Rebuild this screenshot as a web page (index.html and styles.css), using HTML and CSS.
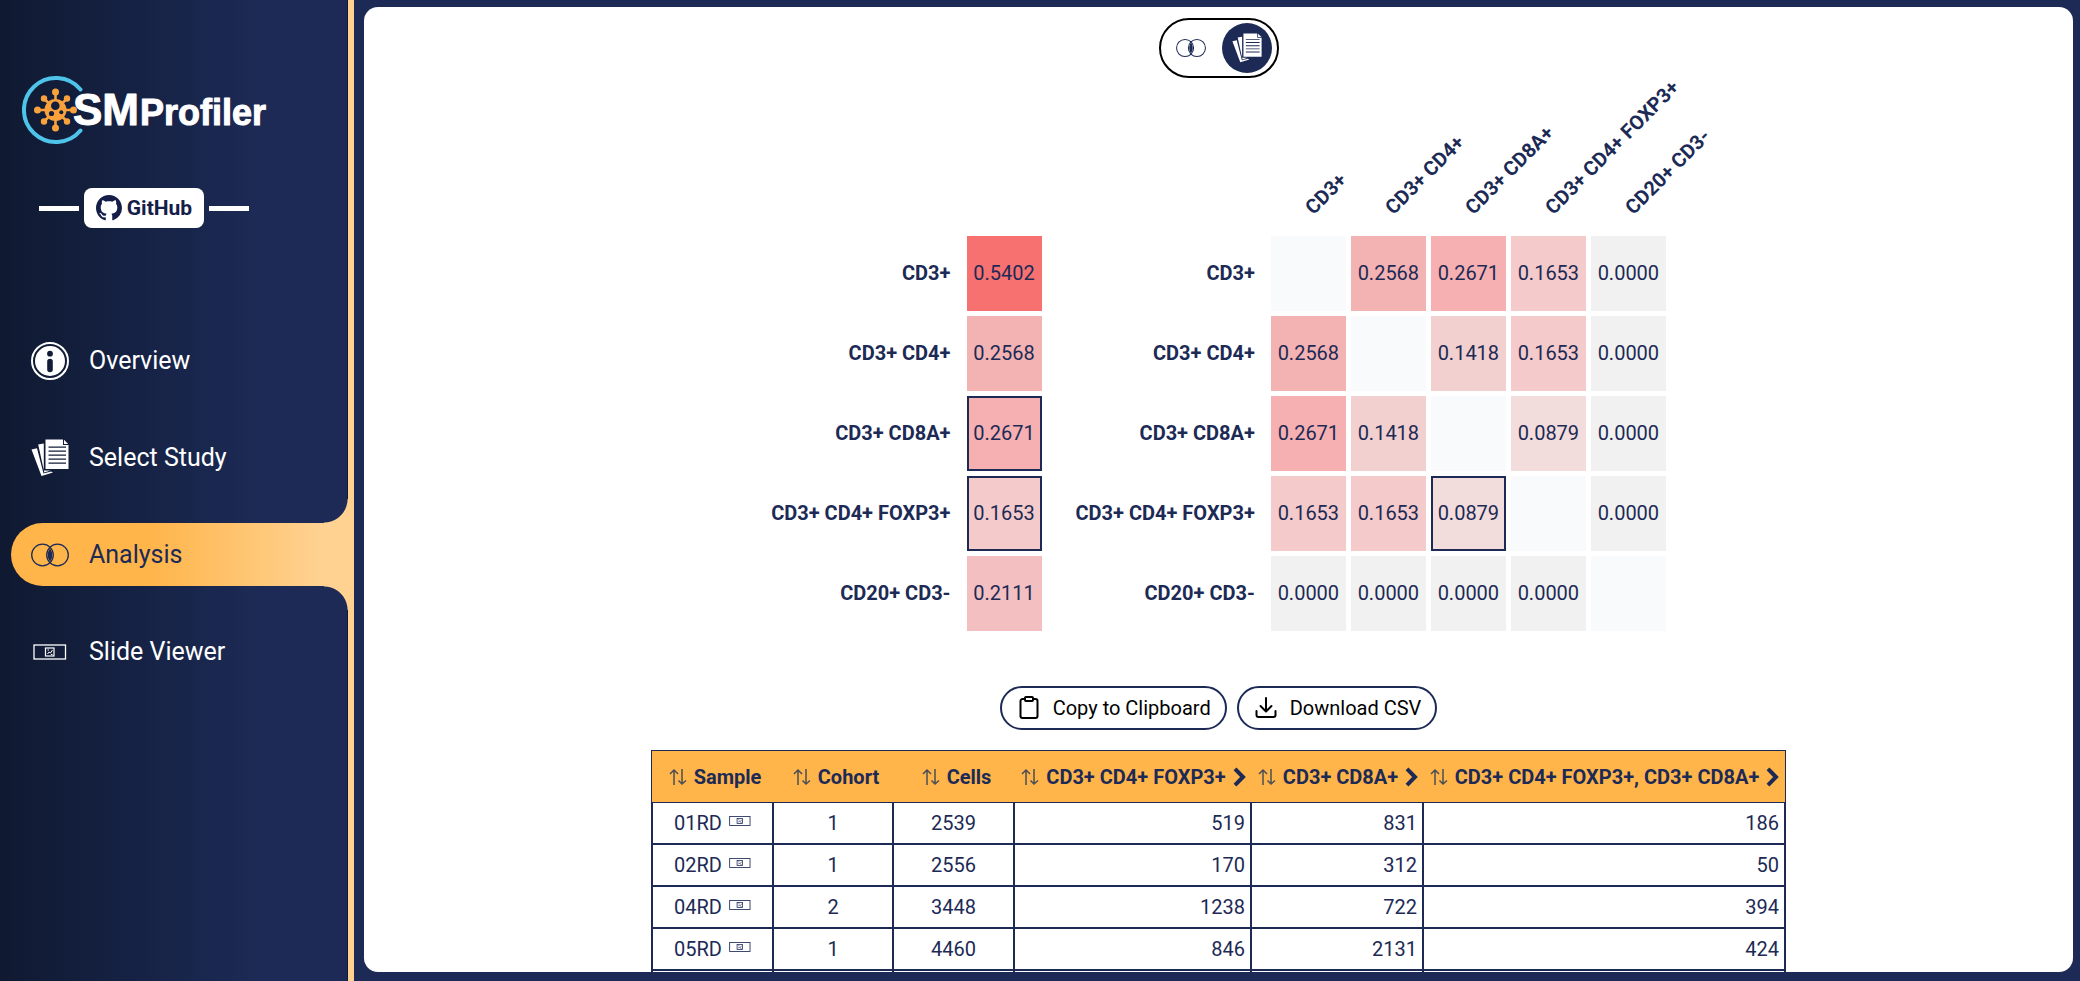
FILE: index.html
```html
<!DOCTYPE html>
<html lang="en">
<head>
<meta charset="utf-8">
<title>SMProfiler</title>
<link rel="stylesheet" href="styles.css">
</head>
<body>
<svg class="sprite" aria-hidden="true">
  <symbol id="i-info" viewBox="0 0 38 38">
    <circle cx="19" cy="19" r="18" fill="none" stroke="currentColor" stroke-width="2"/>
    <path fill="currentColor" fill-rule="evenodd" d="M19 4a15 15 0 1 0 0 30a15 15 0 1 0 0-30zM19 8.800a2.900 2.900 0 1 1 0 5.800a2.900 2.900 0 1 1 0-5.800zM16.200 19.500a2.800 2.800 0 0 1 5.600 0v8a2.800 2.800 0 0 1-5.600 0z"/>
  </symbol>
  <symbol id="i-docs" viewBox="0 0 38 38">
    <g fill="currentColor">
      <path d="M.5 10.500 6 9.200 12.500 34.500 20 32.600 22 33.600 10.500 37z"/>
      <path d="M7.200 5.600 12.800 4.600V31.500H19.500L13.300 33.500z"/>
      <path fill-rule="evenodd" d="M14.500.5H32V6H37.500V30H14.500zM17.500 7.500v1.200H35V7.500zM17.500 11.500v1.200H35V11.500zM17.500 15.500v1.200H35V15.500zM17.500 19.500v1.200H35V19.500zM17.500 23.500v1.200H35V23.500z"/>
      <path d="M33 .8 37.200 5H33z"/>
    </g>
  </symbol>
  <symbol id="i-venn" viewBox="0 0 38 24">
    <circle cx="11.500" cy="12" r="10.800" fill="none" stroke="currentColor" stroke-width="1.300"/>
    <circle cx="26.500" cy="12" r="10.800" fill="none" stroke="currentColor" stroke-width="1.300"/>
    <path d="M19 5.500C22 9 22 15 19 18.500C16 15 16 9 19 5.500z" fill="currentColor"/>
  </symbol>
  <symbol id="i-slide" viewBox="0 0 34 16">
    <g fill="none" stroke="currentColor">
      <rect x="1" y="1" width="31.500" height="14" stroke-width="1.300"/>
      <rect x="12.500" y="4" width="8.500" height="8" stroke-width="1.200"/>
      <path d="M14.500 10l1.500-2 1.500 1 2-3M14.500 6h1.500M18 10.500h1.500"/>
    </g>
  </symbol>
  <symbol id="i-sort" viewBox="0 0 18 18">
    <path d="M5 17V2M1 6 5 2 9 6M13 1V16M9.500 12.500 13 16 17 12.500" fill="none" stroke="currentColor" stroke-width="1.500"/>
  </symbol>
  <symbol id="i-chev" viewBox="0 0 13 20">
    <path d="M2 1.800 10 10 2 18.200" fill="none" stroke="currentColor" stroke-width="4"/>
  </symbol>
</svg>

<aside class="sidebar">
  <svg class="logo" width="250" height="70" viewBox="0 0 250 70" role="img" aria-label="SMProfiler">
    <path d="M58.500 14.500A32 32 0 1 0 58.500 55.500" fill="none" stroke="#4fc4ea" stroke-width="4" stroke-linecap="round"/>
    <g fill="#f9a13c" stroke="#f9a13c">
      <circle cx="33.500" cy="35" r="11" stroke="none"/>
      <path stroke-width="2.600" d="M33.500 17V53M16 35H52M22 23.500 45 46.500M45 23.500 22 46.500"/>
      <g stroke="none">
        <circle cx="33.500" cy="17" r="3.500"/><circle cx="33.500" cy="53" r="3.500"/><circle cx="15.500" cy="35" r="3.500"/><circle cx="51.500" cy="35" r="3.500"/>
        <circle cx="22" cy="23.500" r="3.200"/><circle cx="45" cy="23.500" r="3.200"/><circle cx="22" cy="46.500" r="3.200"/><circle cx="45" cy="46.500" r="3.200"/>
      </g>
      <g fill="#131d3a" stroke="none"><circle cx="33.300" cy="30.700" r="4.300"/><circle cx="29.500" cy="38.500" r="2.600"/><circle cx="39.300" cy="37.200" r="2"/></g>
    </g>
    <text class="logo-big" x="51" y="50">SM</text>
    <text class="logo-small" x="118" y="50">Profiler</text>
  </svg>

  <div class="source">
    <span class="rule"></span>
    <a class="github" href="#github">
      <svg width="26" height="26" viewBox="0 0 16 16" aria-hidden="true"><path fill="currentColor" d="M8 0C3.580 0 0 3.580 0 8c0 3.540 2.290 6.530 5.470 7.590.4.070.55-.17.55-.38 0-.19-.01-.82-.01-1.490-2.010.37-2.530-.49-2.690-.94-.09-.23-.48-.94-.82-1.130-.28-.15-.68-.52-.01-.53.63-.01 1.080.58 1.230.82.72 1.210 1.870.87 2.330.66.07-.52.28-.87.51-1.070-1.780-.2-3.640-.89-3.640-3.950 0-.87.31-1.590.82-2.150-.08-.2-.36-1.020.08-2.120 0 0 .67-.21 2.200.82.64-.18 1.320-.27 2-.27s1.360.09 2 .27c1.530-1.040 2.200-.82 2.200-.82.44 1.100.16 1.920.08 2.120.51.56.82 1.270.82 2.150 0 3.070-1.870 3.750-3.650 3.950.29.25.54.73.54 1.480 0 1.070-.01 1.930-.01 2.200 0 .21.15.46.55.38A8.010 8.010 0 0 0 16 8c0-4.420-3.580-8-8-8z"/></svg>
      <span>GitHub</span>
    </a>
    <span class="rule"></span>
  </div>

  <nav class="nav">
    <a class="item" href="#overview"><svg class="icon"><use href="#i-info"/></svg>Overview</a>
    <a class="item" href="#study"><svg class="icon"><use href="#i-docs"/></svg>Select Study</a>
    <a class="item active" href="#analysis" aria-current="page"><svg class="icon"><use href="#i-venn"/></svg>Analysis</a>
    <a class="item" href="#slides"><svg class="icon slide"><use href="#i-slide"/></svg>Slide Viewer</a>
  </nav>
</aside>

<main class="panel">
  <div class="toggle">
    <button class="mode" type="button" aria-label="Phenotypes"><svg width="30" height="20"><use href="#i-venn"/></svg></button>
    <button class="mode on" type="button" aria-label="Studies"><svg width="30" height="30"><use href="#i-docs"/></svg></button>
  </div>

  <div class="maps">
    <table class="heat">
      <tbody>
        <tr><th scope="row">CD3+</th><td class="v5402">0.5402</td></tr>
        <tr><th scope="row">CD3+ CD4+</th><td class="v2568">0.2568</td></tr>
        <tr><th scope="row">CD3+ CD8A+</th><td class="v2671 picked">0.2671</td></tr>
        <tr><th scope="row">CD3+ CD4+ FOXP3+</th><td class="v1653 picked">0.1653</td></tr>
        <tr><th scope="row">CD20+ CD3-</th><td class="v2111">0.2111</td></tr>
      </tbody>
    </table>
    <table class="heat">
      <thead>
        <tr><td class="corner"></td><th scope="col"><span>CD3+</span></th><th scope="col"><span>CD3+ CD4+</span></th><th scope="col"><span>CD3+ CD8A+</span></th><th scope="col"><span>CD3+ CD4+ FOXP3+</span></th><th scope="col"><span>CD20+ CD3-</span></th></tr>
      </thead>
      <tbody>
        <tr><th scope="row">CD3+</th><td class="self"></td><td class="v2568">0.2568</td><td class="v2671">0.2671</td><td class="v1653">0.1653</td><td class="v0">0.0000</td></tr>
        <tr><th scope="row">CD3+ CD4+</th><td class="v2568">0.2568</td><td class="self"></td><td class="v1418">0.1418</td><td class="v1653">0.1653</td><td class="v0">0.0000</td></tr>
        <tr><th scope="row">CD3+ CD8A+</th><td class="v2671">0.2671</td><td class="v1418">0.1418</td><td class="self"></td><td class="v0879">0.0879</td><td class="v0">0.0000</td></tr>
        <tr><th scope="row">CD3+ CD4+ FOXP3+</th><td class="v1653">0.1653</td><td class="v1653">0.1653</td><td class="v0879 picked">0.0879</td><td class="self"></td><td class="v0">0.0000</td></tr>
        <tr><th scope="row">CD20+ CD3-</th><td class="v0">0.0000</td><td class="v0">0.0000</td><td class="v0">0.0000</td><td class="v0">0.0000</td><td class="self"></td></tr>
      </tbody>
    </table>
  </div>

  <div class="actions">
    <button class="pill" type="button">
      <svg width="24" height="24" viewBox="0 0 24 24" fill="none" stroke="currentColor" stroke-width="2" aria-hidden="true"><path d="M8 3H5.500A2 2 0 0 0 3.500 5V20A2 2 0 0 0 5.500 22H18.500A2 2 0 0 0 20.500 20V5A2 2 0 0 0 18.500 3H16"/><rect x="8" y="1" width="8" height="4" rx="1"/></svg>
      Copy to Clipboard
    </button>
    <button class="pill" type="button">
      <svg width="24" height="24" viewBox="0 0 24 24" fill="none" stroke="currentColor" stroke-width="2" stroke-linecap="round" stroke-linejoin="round" aria-hidden="true"><path d="M12 2V15M6.500 10 12 15.500 17.500 10M2.500 15V19A2 2 0 0 0 4.500 21H19.500A2 2 0 0 0 21.500 19V15"/></svg>
      Download CSV
    </button>
  </div>

  <table class="data">
    <colgroup><col class="c-sample"><col class="c-mid"><col class="c-cells"><col class="c-a"><col class="c-b"><col class="c-ab"></colgroup>
    <thead>
      <tr>
        <th scope="col"><button type="button"><svg class="sort"><use href="#i-sort"/></svg>Sample</button></th>
        <th scope="col"><button type="button"><svg class="sort"><use href="#i-sort"/></svg>Cohort</button></th>
        <th scope="col"><button type="button"><svg class="sort"><use href="#i-sort"/></svg>Cells</button></th>
        <th scope="col"><button type="button"><svg class="sort"><use href="#i-sort"/></svg>CD3+ CD4+ FOXP3+<svg class="chev"><use href="#i-chev"/></svg></button></th>
        <th scope="col"><button type="button"><svg class="sort"><use href="#i-sort"/></svg>CD3+ CD8A+<svg class="chev"><use href="#i-chev"/></svg></button></th>
        <th scope="col"><button type="button"><svg class="sort"><use href="#i-sort"/></svg>CD3+ CD4+ FOXP3+, CD3+ CD8A+<svg class="chev"><use href="#i-chev"/></svg></button></th>
      </tr>
    </thead>
    <tbody>
      <tr><td>01RD <svg class="mini"><use href="#i-slide"/></svg></td><td>1</td><td>2539</td><td class="num">519</td><td class="num">831</td><td class="num">186</td></tr>
      <tr><td>02RD <svg class="mini"><use href="#i-slide"/></svg></td><td>1</td><td>2556</td><td class="num">170</td><td class="num">312</td><td class="num">50</td></tr>
      <tr><td>04RD <svg class="mini"><use href="#i-slide"/></svg></td><td>2</td><td>3448</td><td class="num">1238</td><td class="num">722</td><td class="num">394</td></tr>
      <tr><td>05RD <svg class="mini"><use href="#i-slide"/></svg></td><td>1</td><td>4460</td><td class="num">846</td><td class="num">2131</td><td class="num">424</td></tr>
      <tr><td></td><td></td><td></td><td></td><td></td><td></td></tr>
    </tbody>
  </table>
</main>
</body>
</html>
```
FILE: styles.css
```css
:root {
  --navy: #1c2a55;
  --orange: #ffb54a;
  --peach: #ffd292;
}

* { box-sizing: border-box; }

body {
  margin: 0;
  height: 100vh;
  display: flex;
  overflow: hidden;
  background: var(--navy);
  color: var(--navy);
  font-family: Roboto, "Liberation Sans", sans-serif;
  font-size: 20px;
}

.sprite { position: absolute; width: 0; height: 0; }

button { font: inherit; color: inherit; cursor: pointer; }

/* Sidebar */
.sidebar {
  flex: none;
  width: 354px;
  border-right: 6px solid var(--peach);
  background: linear-gradient(90deg, #0f1931 0, #1c2a55 256px);
  background-clip: padding-box;
  box-shadow: inset -1px 0 #0f1931;
  padding-top: 75px;
}

.logo { display: block; margin-left: 22px; }
.logo text {
  fill: #fff;
  stroke: #fff;
  stroke-width: 1px;
  stroke-linejoin: round;
  font-family: "Liberation Sans", Arial, sans-serif;
  font-weight: 700;
}
.logo .logo-big { font-size: 44px; }
.logo .logo-small { font-size: 36px; }

.source {
  display: flex;
  align-items: center;
  gap: 5px;
  margin: 43px 0 0 39px;
}
.rule { width: 40px; height: 5px; background: #fff; }
.github {
  display: flex;
  align-items: center;
  justify-content: center;
  gap: 5px;
  width: 120px;
  height: 40px;
  border-radius: 8px;
  background: #fff;
  color: #151d49;
  font-size: 21px;
  font-weight: 700;
  text-decoration: none;
}

.nav {
  display: flex;
  flex-direction: column;
  gap: 34px;
  margin: 101px 0 0 11px;
}
.item {
  position: relative;
  display: flex;
  align-items: center;
  gap: 20px;
  height: 63px;
  padding-left: 20px;
  border-radius: 32px 0 0 32px;
  color: #fff;
  font-size: 25px;
  text-decoration: none;
}
.icon { width: 38px; height: 38px; }
.icon.slide { padding: 0 2px; }
.active {
  background: linear-gradient(90deg, var(--orange) 140px, var(--peach) 310px);
  color: var(--navy);
}
.active::before,
.active::after {
  content: "";
  position: absolute;
  right: 0;
  width: 24px;
  height: 24px;
}
.active::before {
  bottom: 100%;
  background: radial-gradient(circle at 0 0, transparent 23px, var(--peach) 24px);
}
.active::after {
  top: 100%;
  background: radial-gradient(circle at 0 100%, transparent 23px, var(--peach) 24px);
}

/* Main panel */
.panel {
  flex: 1;
  display: flex;
  flex-direction: column;
  align-items: center;
  margin: 7px 7px 9px 10px;
  padding-top: 11px;
  border-radius: 14px;
  background: #fff;
  overflow: auto;
  scrollbar-width: none;
}
.panel > * { flex: none; }

.toggle {
  display: flex;
  align-items: center;
  justify-content: space-between;
  width: 120px;
  height: 60px;
  padding: 0 5px;
  border: 2px solid #000;
  border-radius: 30px;
}
.mode {
  display: flex;
  align-items: center;
  justify-content: center;
  width: 50px;
  height: 50px;
  padding: 0;
  border: 0;
  border-radius: 50%;
  background: none;
  color: var(--navy);
}
.mode.on { background: var(--navy); color: #fff; }

/* Heat maps */
.maps {
  display: flex;
  align-items: flex-end;
  gap: 24px;
}
.heat { border-spacing: 5px; }
.heat td {
  width: 75px;
  height: 75px;
  padding: 0 0 2px;
  text-align: center;
}
.heat tbody th {
  padding: 0 11px 2px 0;
  text-align: right;
  white-space: nowrap;
}
.heat thead th {
  position: relative;
  width: 75px;
  height: 148px;
  padding: 0;
}
.heat thead span {
  position: absolute;
  left: 46px;
  bottom: 12px;
  line-height: 24px;
  white-space: nowrap;
  transform: rotate(-45deg);
  transform-origin: 0 100%;
}
.heat .corner { height: auto; }
.heat .picked { border: 2px solid var(--navy); }
.heat .self { background: #f9fafc; }
.v0 { background: #f1f1f1; }
.v0879 { background: #f2dddc; }
.v1418 { background: #f1d0cf; }
.v1653 { background: #f4cacb; }
.v2111 { background: #f3bfc0; }
.v2568 { background: #f4b3b3; }
.v2671 { background: #f6b0b1; }
.v5402 { background: #f87171; }

/* Export buttons */
.actions {
  display: flex;
  gap: 10px;
  margin: 50px 0 20px;
}
.pill {
  display: flex;
  align-items: center;
  gap: 12px;
  height: 44px;
  padding: 0 14px 0 15px;
  border: 2px solid var(--navy);
  border-radius: 22px;
  background: #fff;
  color: #000;
}

/* Results table */
.data {
  table-layout: fixed;
  width: 1135px;
  border-spacing: 0;
  text-align: center;
}
.c-sample { width: 123px; }
.c-mid { width: 120px; }
.c-cells { width: 121px; }
.c-a { width: 237px; }
.c-b { width: 172px; }
.data th {
  height: 53px;
  padding: 0;
  border: solid var(--navy);
  border-width: 1px 0;
  background: var(--orange);
}
.data th:first-child { border-left-width: 1px; }
.data th:last-child { border-right-width: 1px; }
.data th button {
  display: flex;
  align-items: center;
  justify-content: center;
  gap: 7px;
  width: 100%;
  padding: 0;
  border: 0;
  background: none;
  white-space: nowrap;
}
.data th:nth-child(-n+3) button { padding-left: 4px; }
.sort { width: 18px; height: 18px; color: #4b4f55; }
.chev { width: 13px; height: 20px; }
.data td {
  height: 42px;
  padding: 0 5px;
  border: solid var(--navy);
  border-width: 0 2px 2px 0;
}
.data td:first-child { border-left-width: 2px; }
.data .num { text-align: right; }
.mini { width: 22px; height: 12px; margin-left: 2px; vertical-align: 3px; }
```
